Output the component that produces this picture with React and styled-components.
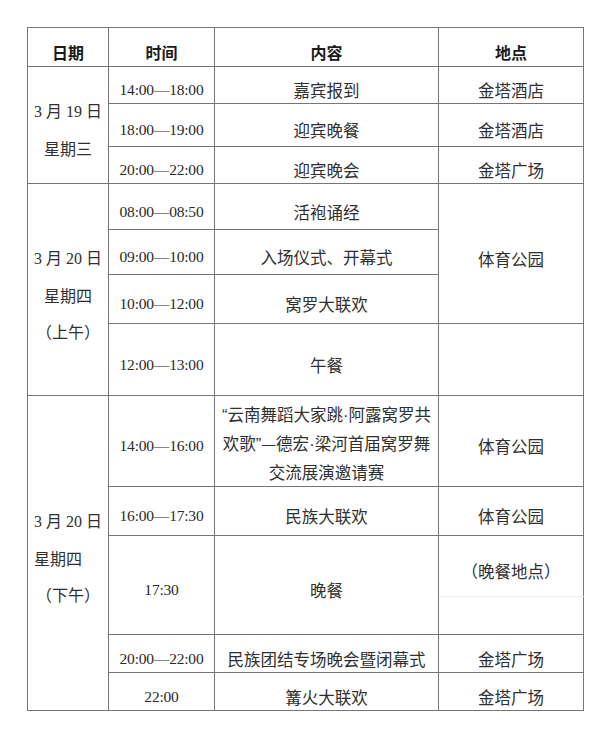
import styled, { createGlobalStyle } from 'styled-components';

const GlobalStyle = createGlobalStyle`
  html, body {
    margin: 0;
    padding: 0;
    background: #ffffff;
  }
`;

const Page = styled.div`
  width: 600px;
  height: 756px;
  padding: 27px 0 0 27px;
  box-sizing: border-box;
  background: #ffffff;
`;

const Table = styled.table`
  width: 556px;
  border-collapse: collapse;
  table-layout: fixed;
  color: #303030;
  font-family: "Noto Sans CJK SC", sans-serif;
  font-size: 16.5px;
`;

const Row = styled.tr`
  height: ${p => p.$h}px;
`;

const Cell = styled.td`
  border: 1px solid #767676;
  border-bottom-color: ${p => (p.$faint ? '#ebebeb' : '#767676')};
  padding: 10px 4px 0;
  text-align: center;
  vertical-align: middle;
  line-height: 24px;
`;

const HeadCell = styled(Cell).attrs({ as: 'th' })`
  font-size: 16px;
  font-weight: 700;
  color: #1b1b1b;
`;

const TimeCell = styled(Cell)`
  font-family: "Liberation Serif", serif;
  font-size: 15.5px;
  letter-spacing: -0.2px;
  color: #2a2a2a;
`;

const DateCell = styled(Cell)`
  font-family: "Liberation Serif", "Noto Sans CJK SC", serif;
  font-size: 16px;
  line-height: 36px;
  padding-left: 0;
  padding-right: 0;
`;

const DateLine = styled.div`
  text-align: ${p => (p.$left ? 'left' : 'center')};
  padding-left: ${p => (p.$left ? '6px' : '0')};
  font-family: ${p => (p.$cjk ? '"Noto Sans CJK SC", sans-serif' : 'inherit')};
`;

const LongCell = styled(Cell)`
  padding: 4px 0 0;
  line-height: 28px;
  white-space: nowrap;
`;

const Punct = styled.span`
  font-family: "Liberation Sans", sans-serif;
`;

const columns = [81, 106, 224, 145];

function DateBlock({ lines }) {
  return lines.map((l, i) => (
    <DateLine key={i} $left={l.left} $cjk={l.cjk}>
      {l.text}
    </DateLine>
  ));
}

export default function App() {
  return (
    <Page>
      <GlobalStyle />
      <Table>
        <colgroup>
          {columns.map((w, i) => (
            <col key={i} style={{ width: w }} />
          ))}
        </colgroup>
        <tbody>
          <Row $h={39}>
            <HeadCell>日期</HeadCell>
            <HeadCell>时间</HeadCell>
            <HeadCell>内容</HeadCell>
            <HeadCell>地点</HeadCell>
          </Row>

          <Row $h={37}>
            <DateCell rowSpan={3}>
              <DateBlock lines={[{ text: '3 月 19 日' }, { text: '星期三', cjk: true }]} />
            </DateCell>
            <TimeCell>14:00—18:00</TimeCell>
            <Cell>嘉宾报到</Cell>
            <Cell>金塔酒店</Cell>
          </Row>
          <Row $h={43}>
            <TimeCell>18:00—19:00</TimeCell>
            <Cell>迎宾晚餐</Cell>
            <Cell>金塔酒店</Cell>
          </Row>
          <Row $h={37}>
            <TimeCell>20:00—22:00</TimeCell>
            <Cell>迎宾晚会</Cell>
            <Cell>金塔广场</Cell>
          </Row>

          <Row $h={46}>
            <DateCell rowSpan={4}>
              <DateBlock
                lines={[
                  { text: '3 月 20 日' },
                  { text: '星期四', cjk: true },
                  { text: '（上午）', cjk: true },
                ]}
              />
            </DateCell>
            <TimeCell>08:00—08:50</TimeCell>
            <Cell>活袍诵经</Cell>
            <Cell rowSpan={3}>体育公园</Cell>
          </Row>
          <Row $h={45}>
            <TimeCell>09:00—10:00</TimeCell>
            <Cell>入场仪式、开幕式</Cell>
          </Row>
          <Row $h={49}>
            <TimeCell>10:00—12:00</TimeCell>
            <Cell>窝罗大联欢</Cell>
          </Row>
          <Row $h={72}>
            <TimeCell>12:00—13:00</TimeCell>
            <Cell>午餐</Cell>
            <Cell />
          </Row>

          <Row $h={91}>
            <DateCell rowSpan={7}>
              <DateBlock
                lines={[
                  { text: '3 月 20 日' },
                  { text: '星期四', cjk: true, left: true },
                  { text: '（下午）', cjk: true },
                ]}
              />
            </DateCell>
            <TimeCell>14:00—16:00</TimeCell>
            <LongCell>
              <Punct>“</Punct>云南舞蹈大家跳<Punct>·</Punct>阿露窝罗共
              <br />
              欢歌<Punct>”</Punct>—德宏<Punct>·</Punct>梁河首届窝罗舞
              <br />
              交流展演邀请赛
            </LongCell>
            <Cell>体育公园</Cell>
          </Row>
          <Row $h={49}>
            <TimeCell>16:00—17:30</TimeCell>
            <Cell>民族大联欢</Cell>
            <Cell>体育公园</Cell>
          </Row>
          <Row $h={61}>
            <TimeCell rowSpan={2}>17:30</TimeCell>
            <Cell rowSpan={2}>晚餐</Cell>
            <Cell $faint>（晚餐地点）</Cell>
          </Row>
          <Row $h={38}>
            <Cell />
          </Row>
          <Row $h={38}>
            <TimeCell>20:00—22:00</TimeCell>
            <Cell>民族团结专场晚会暨闭幕式</Cell>
            <Cell>金塔广场</Cell>
          </Row>
          <Row $h={38}>
            <TimeCell>22:00</TimeCell>
            <Cell>篝火大联欢</Cell>
            <Cell>金塔广场</Cell>
          </Row>
        </tbody>
      </Table>
    </Page>
  );
}
